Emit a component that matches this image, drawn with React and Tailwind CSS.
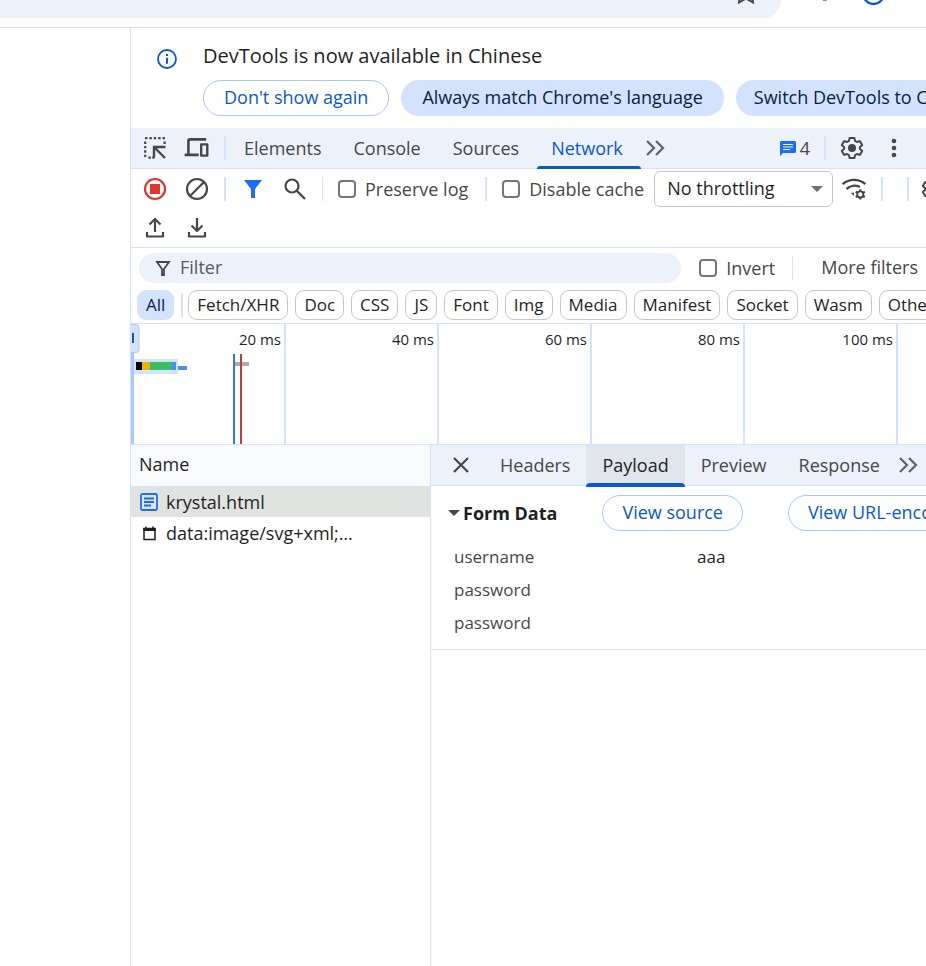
import { useState } from "react";

const mainTabs = ["Elements", "Console", "Sources", "Network"];
const detailTabs = ["Headers", "Payload", "Preview", "Response"];
const types = [
  "Fetch/XHR",
  "Doc",
  "CSS",
  "JS",
  "Font",
  "Img",
  "Media",
  "Manifest",
  "Socket",
  "Wasm",
  "Other",
];
const ticks = ["20 ms", "40 ms", "60 ms", "80 ms", "100 ms"];
const formData = [
  { name: "username", value: "aaa" },
  { name: "password", value: "" },
  { name: "password", value: "" },
];

function Icon({ children, className = "size-6 text-[#474747]" }) {
  return (
    <svg
      viewBox="0 0 24 24"
      fill="none"
      stroke="currentColor"
      strokeWidth="2.2"
      aria-hidden="true"
      className={`shrink-0 ${className}`}
    >
      {children}
    </svg>
  );
}

function Gear() {
  return (
    <Icon>
      <path
        d="M9.6 2h4.8l.7 3 1.8 1 2.9-.9 2.4 4-2.3 2.1v1.6l2.3 2.1-2.4 4-2.9-.9-1.8 1-.7 3H9.600l-.7-3-1.800-1-2.900.9-2.400-4 2.300-2.100v-1.600L1.800 9.100l2.400-4 2.900.9 1.800-1z"
        strokeLinejoin="round"
        strokeWidth="2"
      />
      <circle cx="12" cy="12" r="4" fill="currentColor" stroke="none" />
    </Icon>
  );
}

function Chevrons() {
  return (
    <Icon className="size-6 text-[#5f6368]">
      <path d="M4 5l7 7-7 7M13 5l7 7-7 7" />
    </Icon>
  );
}

function Divider({ className = "w-0.5" }) {
  return <div className={`h-6 shrink-0 bg-[#d3e3fd] ${className}`} />;
}

function CheckBox({ label, className = "" }) {
  return (
    <label
      className={`flex shrink-0 items-center gap-[9px] text-[#474747] ${className}`}
    >
      <input
        type="checkbox"
        className="size-[18px] appearance-none rounded-[4px] border-2 border-[#757575] bg-white checked:bg-[#0b57d0]"
      />
      {label}
    </label>
  );
}

function BrowserBar() {
  return (
    <header className="flex h-7 items-start overflow-hidden border-b border-[#dcdee1]">
      <div className="flex h-[18px] flex-1 justify-end rounded-br-[24px] bg-[#ecf1fa] pr-[24px]">
        <svg viewBox="0 0 22 6" className="h-[6px] w-[22px] text-[#474747]">
          <path
            d="M5 -6L4 2.5L11 -1.5L18 2.5L17 -6"
            fill="none"
            stroke="currentColor"
            strokeWidth="2"
          />
        </svg>
      </div>
      <div className="flex w-[145px] items-start pl-[38px]">
        <svg viewBox="0 0 110 6" className="h-[6px] w-[110px]">
          <rect x="4" y="0" width="4" height="1" fill="#8a8d91" />
          <circle
            cx="56"
            cy="-6.5"
            r="10.5"
            fill="none"
            stroke="#0b57d0"
            strokeWidth="2.4"
          />
        </svg>
      </div>
    </header>
  );
}

function InfoBar() {
  return (
    <div className="flex h-[100px] shrink-0 items-start gap-6 pl-6 pt-3">
      <Icon className="mt-[7px] size-6 text-[#0b57d0]">
        <circle cx="12" cy="12" r="9" strokeWidth="1.8" />
        <path d="M12 10.8v6M12 7v2" strokeWidth="2" />
      </Icon>
      <div className="flex flex-col gap-2">
        <p className="text-[20px] leading-8 text-[#1f1f1f]">
          DevTools is now available in Chinese
        </p>
        <div className="flex gap-3 whitespace-nowrap">
          <button className="h-9 rounded-full border border-[#a8c7fa] px-5 pb-0.5 text-[#0b57d0]">
            Don't show again
          </button>
          <button className="h-9 rounded-full bg-[#d3e3fd] px-[21px] pb-0.5 text-[#041e49]">
            Always match Chrome's language
          </button>
          <button className="h-9 rounded-full bg-[#d3e3fd] px-[18px] pb-0.5 text-[#041e49]">
            Switch DevTools to Chinese
          </button>
        </div>
      </div>
    </div>
  );
}

function MainTabs() {
  const [active, setActive] = useState("Network");

  return (
    <nav className="flex h-[41px] shrink-0 items-center border-b border-[#d3e3fd] bg-[#ecf1fa] pl-3 pr-5">
      <button aria-label="Select an element">
        <Icon>
          <path d="M2 2.2h20" strokeDasharray="2.4 2" />
          <path d="M2.2 5.5V22" strokeDasharray="2.4 2" />
          <path d="M21.6 5.5v2.4M5.5 21.6h6" strokeDasharray="2.4 1.4" />
          <path d="M11 21.5V11h11.5M11.5 11.5l10.5 10.5" strokeWidth="2.4" />
        </Icon>
      </button>
      <button aria-label="Toggle device toolbar" className="ml-4">
        <Icon className="size-[26px] text-[#474747]">
          <path d="M5 18V5.500q0-1.500 1.500-1.500h14.900M1.500 18.300h13" strokeWidth="2.400" />
          <path d="M16.800 8.700h5.600v10.300h-5.600z" strokeLinejoin="round" />
        </Icon>
      </button>
      <Divider className="ml-[15px] mr-[2px] w-0.5" />
      {mainTabs.map((tab) => (
        <button
          key={tab}
          onClick={() => setActive(tab)}
          className={`relative h-10 px-4 ${
            tab === active ? "text-[#0b57d0]" : "text-[#474747]"
          }`}
        >
          {tab}
          {tab === active && (
            <span className="absolute -right-0.5 left-0.5 -bottom-px h-[3px] rounded-t-full bg-[#0b57d0]" />
          )}
        </button>
      ))}
      <button aria-label="More tabs" className="ml-1">
        <Chevrons />
      </button>
      <button className="ml-auto flex items-center gap-1 text-[#474747]">
        <svg viewBox="0 0 16 16" className="size-4 text-[#1a6ef5]">
          <path
            d="M1.500 1h13A1.500 1.500 0 0 1 16 2.500v9A1.500 1.500 0 0 1 14.500 13H3L0 16V2.500A1.500 1.500 0 0 1 1.500 1z"
            fill="currentColor"
          />
          <path d="M3 4.500h10M3 7h10M3 9.500h7" stroke="#ecf1fa" strokeWidth="1.200" />
        </svg>
        4
      </button>
      <Divider className="mx-[14px] w-0.5" />
      <button aria-label="Settings">
        <Gear />
      </button>
      <button aria-label="More options" className="ml-[18px]">
        <Icon>
          <g fill="currentColor" stroke="none">
            <circle cx="12" cy="5" r="2.300" />
            <circle cx="12" cy="12" r="2.300" />
            <circle cx="12" cy="19" r="2.300" />
          </g>
        </Icon>
      </button>
    </nav>
  );
}

function Toolbar() {
  return (
    <div className="shrink-0 border-b border-[#d3e3fd]">
      <div className="flex h-10 items-center overflow-hidden whitespace-nowrap pl-3">
        <button aria-label="Stop recording">
          <Icon className="size-6 text-[#dc362e]">
            <circle cx="12" cy="12" r="10" />
            <path d="M7 7h10v10H7z" fill="currentColor" stroke="none" />
          </Icon>
        </button>
        <button aria-label="Clear" className="ml-[18px]">
          <Icon>
            <circle cx="12" cy="12" r="10" />
            <path d="M5 19L19 5" />
          </Icon>
        </button>
        <Divider className="ml-[15px] w-0.5" />
        <button aria-label="Filter" className="ml-[15px]">
          <Icon className="size-6 text-[#1a6ef5]">
            <path d="M3 3h18l-7 9v9h-4v-9z" fill="currentColor" stroke="none" />
          </Icon>
        </button>
        <button aria-label="Search" className="ml-[18px]">
          <Icon>
            <circle cx="9" cy="9" r="6.500" />
            <path d="M13.500 13.500l8.500 8.500" strokeWidth="2.400" />
          </Icon>
        </button>
        <Divider className="ml-[15px] w-px" />
        <CheckBox label="Preserve log" className="ml-[15px]" />
        <Divider className="ml-[17px] w-0.5" />
        <CheckBox label="Disable cache" className="ml-[15px]" />
        <div className="relative ml-[10px] shrink-0">
          <select
            aria-label="Throttling"
            className="h-9 w-[179px] appearance-none rounded-md border border-[#c7c7c7] bg-white pb-0.5 pl-3 text-[#1f1f1f]"
          >
            <option>No throttling</option>
          </select>
          <svg
            viewBox="0 0 12 6"
            className="pointer-events-none absolute right-[10px] top-[15px] h-[6px] w-3"
          >
            <path d="M0 0h12L6 6z" fill="#6e6e6e" />
          </svg>
        </div>
        <button aria-label="Network conditions" className="ml-2">
          <Icon className="size-[26px] text-[#474747]">
            <path d="M1.500 7.500c6-5.200 15-5.200 21 0" />
            <path d="M5 12c3.500-3.200 8.500-3.800 12.500-1.800" />
            <path d="M9 15.500h3v3z" fill="currentColor" stroke="none" />
            <circle cx="17.800" cy="17" r="2.800" strokeWidth="1.700" />
            <path
              d="M17.800 12.200v2M17.800 19.800v2M13.600 14.600l1.800 1M20.200 18.400l1.800 1M13.600 19.400l1.800-1M20.200 15.600l1.800-1"
              strokeWidth="2"
            />
          </Icon>
        </button>
        <Divider className="ml-[14px] w-0.5" />
        <Divider className="ml-6 w-0.5" />
        <button aria-label="Network settings" className="ml-3">
          <Gear />
        </button>
      </div>
      <div className="flex h-[38px] items-center gap-[18px] pl-3">
        <button aria-label="Import HAR">
          <Icon>
            <path
              d="M12 16V3.500M6.500 8.500L12 3l5.500 5.500M4 16v4.500h16V16"
              strokeLinejoin="round"
            />
          </Icon>
        </button>
        <button aria-label="Export HAR">
          <Icon>
            <path
              d="M12 2v12.500M6.500 9.500L12 15l5.500-5.500M4 16v4.500h16V16"
              strokeLinejoin="round"
            />
          </Icon>
        </button>
      </div>
    </div>
  );
}

function FilterBar() {
  const [type, setType] = useState("All");

  return (
    <div className="shrink-0 overflow-hidden whitespace-nowrap border-b border-[#d3e3fd] pt-[5px]">
      <div className="flex items-center pl-2 pr-[6px]">
        <label className="flex h-[30px] min-w-0 flex-1 items-center gap-[9px] rounded-full bg-[#ecf1fa] pl-4">
          <svg
            viewBox="0 0 16 16"
            className="size-4 shrink-0 text-[#474747]"
            fill="none"
            stroke="currentColor"
            strokeWidth="1.800"
          >
            <path d="M2 2h12L9 9v6H7V9z" />
          </svg>
          <input
            type="text"
            placeholder="Filter"
            aria-label="Filter"
            className="w-full min-w-0 bg-transparent pb-0.5 outline-none placeholder:text-[#5a5a5a]"
          />
        </label>
        <CheckBox label="Invert" className="ml-[18px]" />
        <Divider className="ml-[17px] w-px" />
        <button className="ml-7 pb-0.5 pr-0.5 text-[#474747]">
          More filters
        </button>
      </div>
      <div className="flex items-center gap-[7px] pb-[3px] pl-[6px] pt-[7px] text-[17px]">
        <button
          onClick={() => setType("All")}
          className="h-[30px] shrink-0 rounded-[9px] bg-[#d3e3fd] px-[9px] text-[#041e49]"
        >
          All
        </button>
        <Divider className="-mr-0.5 w-0.5" />
        {types.map((t) => (
          <button
            key={t}
            onClick={() => setType(t)}
            className={`h-[30px] shrink-0 rounded-[9px] border border-[#c7c7c7] px-2 text-[#1f1f1f] ${
              t === type ? "bg-[#d3e3fd]" : "bg-white"
            }`}
          >
            {t}
          </button>
        ))}
      </div>
    </div>
  );
}

function Overview() {
  return (
    <div className="relative flex h-[121px] shrink-0 overflow-hidden border-b border-[#d3e3fd] pl-px">
      {ticks.map((tick) => (
        <div
          key={tick}
          className="w-[153px] shrink-0 border-r-2 border-[#d3e3fd] pr-[3px] pt-[3px] text-right text-[15px] leading-6 text-[#1f1f1f] first:w-[154px]"
        >
          {tick}
        </div>
      ))}
      {/* request timings */}
      <svg viewBox="0 0 130 120" className="absolute left-0 top-0 h-[120px] w-[130px]">
        <path d="M0 0h3v120H0z" fill="#a8c7fa" />
        <path
          d="M-1 .5h6a3 3 0 0 1 3 3v22a3 3 0 0 1-3 3h-6z"
          fill="#d3e3fd"
          stroke="#a8c7fa"
        />
        <path d="M1 9h2v10H1z" fill="#0b57d0" />
        <path d="M3 35h44v15H3z" fill="#d3e3fd" />
        <path d="M5 38h6v8H5z" fill="#000" />
        <path d="M11 38h8v8h-8z" fill="#eab308" />
        <path d="M19 38h22v8H19z" fill="#3abf63" />
        <path d="M41 38h4v8h-4zM47 42h9v4h-9z" fill="#4c8df6" />
        <path d="M104 38h14v4h-14z" fill="#adadad" />
        <path d="M102 30h2v90h-2z" fill="#3b74d9" />
        <path d="M109 30h2v90h-2z" fill="#b3423f" />
      </svg>
    </div>
  );
}

function RequestList() {
  return (
    <table className="w-full border-collapse text-left text-[#1f1f1f]">
      <thead>
        <tr>
          <th className="h-[41px] border-b border-[#d3e3fd] bg-[#f8fafd] px-2 pb-0.5 font-normal">
            Name
          </th>
        </tr>
      </thead>
      <tbody>
        <tr className="bg-[#e1e3e1]">
          <td className="h-[31px] px-[9px]">
            <div className="flex items-center gap-2">
              <svg viewBox="0 0 18 18" fill="none" stroke="#1a6ef5" className="size-[18px]">
                <rect x="1" y="1" width="16" height="16" rx="1.500" strokeWidth="1.800" />
                <path d="M4 5.500h10M4 9h10M4 12.500h7" strokeWidth="1.800" />
              </svg>
              krystal.html
            </div>
          </td>
        </tr>
        <tr>
          <td className="h-[31px] px-[9px]">
            <div className="flex items-center gap-2">
              <svg viewBox="0 0 18 18" fill="none" stroke="#1f1f1f" className="size-[18px]">
                <path d="M4 4.500h11v11H4z" strokeWidth="1.500" />
                <path d="M3.300 5.500h12.400" strokeWidth="3" />
                <path d="M6 2.500v2M13 2.500v2" strokeWidth="1.500" />
              </svg>
              data:image/svg+xml;…
            </div>
          </td>
        </tr>
      </tbody>
    </table>
  );
}

function Details() {
  const [active, setActive] = useState("Payload");

  return (
    <section className="min-w-0 flex-1 overflow-hidden whitespace-nowrap border-l border-[#d3e3fd]">
      <nav className="flex h-[41px] items-center border-b border-[#d3e3fd] bg-[#ecf1fa] pl-[18px]">
        <button aria-label="Close" className="mr-[11px]">
          <Icon>
            <path d="M5 5l14 14M19 5L5 19" />
          </Icon>
        </button>
        {detailTabs.map((tab) => (
          <button
            key={tab}
            onClick={() => setActive(tab)}
            className={`relative h-10 px-4 ${
              tab === active ? "bg-[#e1e5ec] text-[#1f1f1f]" : "text-[#474747]"
            }`}
          >
            {tab}
            {tab === active && (
              <span className="absolute inset-x-0 -bottom-0.5 h-1 rounded-t-full bg-[#0b57d0]" />
            )}
          </button>
        ))}
        <button aria-label="More tabs">
          <Chevrons />
        </button>
      </nav>
      <div className="border-b border-[#d3e3fd] pb-[10px] pt-[9px]">
        <div className="flex items-center pl-[17px]">
          <h2 className="flex items-center gap-[3px] font-bold text-[#1f1f1f]">
            <svg viewBox="0 0 12 6" className="h-[6px] w-3">
              <path d="M0 0h12L6 6z" fill="#474747" />
            </svg>
            Form Data
          </h2>
          <button className="ml-[45px] h-9 shrink-0 rounded-full border border-[#a8c7fa] px-[19px] pb-0.5 text-[#0b57d0]">
            View source
          </button>
          <button className="ml-[45px] h-9 shrink-0 rounded-full border border-[#a8c7fa] px-[19px] pb-0.5 text-[#0b57d0]">
            View URL-encoded
          </button>
        </div>
        <dl className="mt-[9px] text-[17px]">
          {formData.map((item, i) => (
            <div key={i} className="flex h-[33px] items-center pl-[23px]">
              <dt className="w-[243px] text-[#474747]">{item.name}</dt>
              <dd className="text-[#1f1f1f]">{item.value}</dd>
            </div>
          ))}
        </dl>
      </div>
    </section>
  );
}

function App() {
  return (
    <div className="flex min-h-screen flex-col overflow-hidden bg-white font-['Open_Sans','Noto_Sans',sans-serif] text-[18px] leading-6">
      <BrowserBar />
      <div className="flex flex-1">
        <div className="w-[130px] shrink-0" />
        <main className="flex min-w-0 flex-1 flex-col overflow-hidden border-l border-[#d3e3fd]">
          <InfoBar />
          <MainTabs />
          <Toolbar />
          <FilterBar />
          <Overview />
          <div className="flex flex-1">
            <div className="w-[299px] shrink-0">
              <RequestList />
            </div>
            <Details />
          </div>
        </main>
      </div>
    </div>
  );
}

export default App;
